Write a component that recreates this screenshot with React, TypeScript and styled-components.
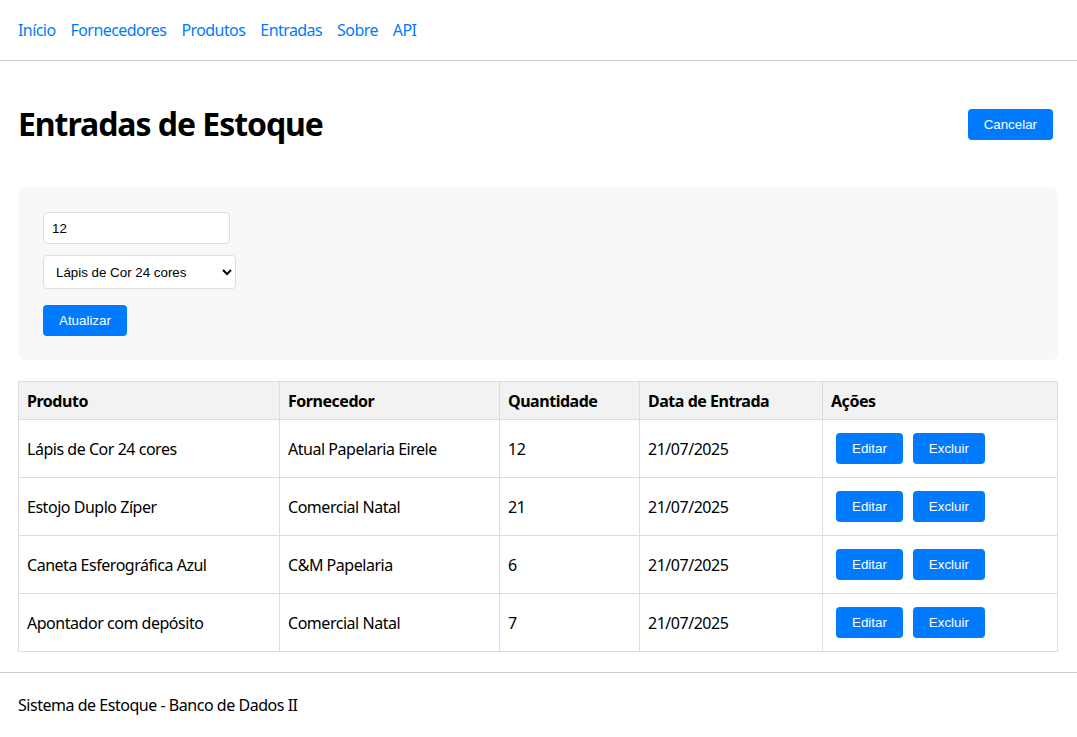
import React from "react";
import styled, { createGlobalStyle } from "styled-components";

const GlobalStyle = createGlobalStyle`
  html, body { margin: 0; padding: 0; background: #fff; }
  body {
    font-family: "Noto Sans", "Open Sans", sans-serif;
    font-size: 16px;
    letter-spacing: -0.47px;
    color: #000;
  }
  * { box-sizing: border-box; }
`;

const Nav = styled.nav`
  height: 61px;
  display: flex;
  align-items: center;
  padding: 0 18px;
  border-bottom: 1px solid #ccc;
  gap: 15px;
`;

const NavLink = styled.a`
  color: #007bff;
  text-decoration: none;
  font-size: 16px;
  letter-spacing: -0.57px;
`;

const Main = styled.main`
  padding: 0 19px 20px 18px;
`;

const Header = styled.div`
  display: flex;
  align-items: center;
  justify-content: space-between;
  height: 40px;
  margin: 43px 0 43px 0;
  padding-right: 5px;
`;

const Title = styled.h1`
  margin: 0;
  font-size: 32px;
  font-weight: 700;
  line-height: 42px;
  letter-spacing: -1.05px;
`;

const Button = styled.button<{ $inline?: boolean }>`
  font-family: "Liberation Sans", Arial, sans-serif;
  font-size: 13.33px;
  line-height: 15px;
  letter-spacing: 0;
  color: #fff;
  background: #007bff;
  border: none;
  border-radius: 4px;
  padding: 8px 16px;
  cursor: pointer;
  margin: ${(p) => (p.$inline ? "0 5px" : "0")};
`;

const FormPanel = styled.form`
  background: #f8f8f8;
  border-radius: 8px;
  padding: 25px 25px 24px 25px;
  display: flex;
  flex-direction: column;
  align-items: flex-start;
`;

const TextInput = styled.input`
  width: 187px;
  height: 32px;
  padding: 0 8px;
  border: 1px solid #ddd;
  border-radius: 4px;
  font-family: "Liberation Sans", Arial, sans-serif;
  font-size: 13.33px;
  letter-spacing: 0;
  background: #fff;
  margin-bottom: 11px;
`;

const Select = styled.select`
  width: 193px;
  height: 34px;
  padding: 0 8px;
  border: 1px solid #ddd;
  border-radius: 4px;
  font-family: "Liberation Sans", Arial, sans-serif;
  font-size: 13.33px;
  letter-spacing: 0;
  background: #fff;
  color: #000;
  margin-bottom: 16px;
`;

const Table = styled.table`
  width: 100%;
  border-collapse: collapse;
  margin-top: 21px;
  border: 1px solid #ddd;
`;

const Th = styled.th<{ $w?: number }>`
  text-align: left;
  font-weight: 700;
  background: #f2f2f2;
  border: 1px solid #ddd;
  padding: 0 8px;
  height: 38px;
  width: ${(p) => (p.$w ? `${p.$w}px` : "auto")};
`;

const Td = styled.td`
  border: 1px solid #ddd;
  padding: 0 8px;
  height: 58px;
  vertical-align: middle;
`;

const Footer = styled.footer`
  border-top: 1px solid #ccc;
  padding: 20px 18px;
  line-height: 24px;
`;

const rows = [
  ["Lápis de Cor 24 cores", "Atual Papelaria Eirele", "12", "21/07/2025"],
  ["Estojo Duplo Zíper", "Comercial Natal", "21", "21/07/2025"],
  ["Caneta Esferográfica Azul", "C&M Papelaria", "6", "21/07/2025"],
  ["Apontador com depósito", "Comercial Natal", "7", "21/07/2025"],
];

export default function App() {
  return (
    <>
      <GlobalStyle />
      <Nav>
        <NavLink href="#">Início</NavLink>
        <NavLink href="#">Fornecedores</NavLink>
        <NavLink href="#">Produtos</NavLink>
        <NavLink href="#">Entradas</NavLink>
        <NavLink href="#">Sobre</NavLink>
        <NavLink href="#">API</NavLink>
      </Nav>
      <Main>
        <Header>
          <Title>Entradas de Estoque</Title>
          <Button type="button">Cancelar</Button>
        </Header>
        <FormPanel onSubmit={(e) => e.preventDefault()}>
          <TextInput defaultValue="12" />
          <Select defaultValue="1">
            <option value="1">Lápis de Cor 24 cores</option>
            <option value="2">Estojo Duplo Zíper</option>
            <option value="3">Caneta Esferográfica Azul</option>
            <option value="4">Apontador com depósito</option>
          </Select>
          <Button type="submit">Atualizar</Button>
        </FormPanel>
        <Table>
          <thead>
            <tr>
              <Th $w={261}>Produto</Th>
              <Th $w={220}>Fornecedor</Th>
              <Th $w={140}>Quantidade</Th>
              <Th $w={183}>Data de Entrada</Th>
              <Th>Ações</Th>
            </tr>
          </thead>
          <tbody>
            {rows.map((r) => (
              <tr key={r[0]}>
                <Td>{r[0]}</Td>
                <Td>{r[1]}</Td>
                <Td>{r[2]}</Td>
                <Td>{r[3]}</Td>
                <Td>
                  <Button type="button" $inline>Editar</Button>
                  <Button type="button" $inline>Excluir</Button>
                </Td>
              </tr>
            ))}
          </tbody>
        </Table>
      </Main>
      <Footer>Sistema de Estoque - Banco de Dados II</Footer>
    </>
  );
}
